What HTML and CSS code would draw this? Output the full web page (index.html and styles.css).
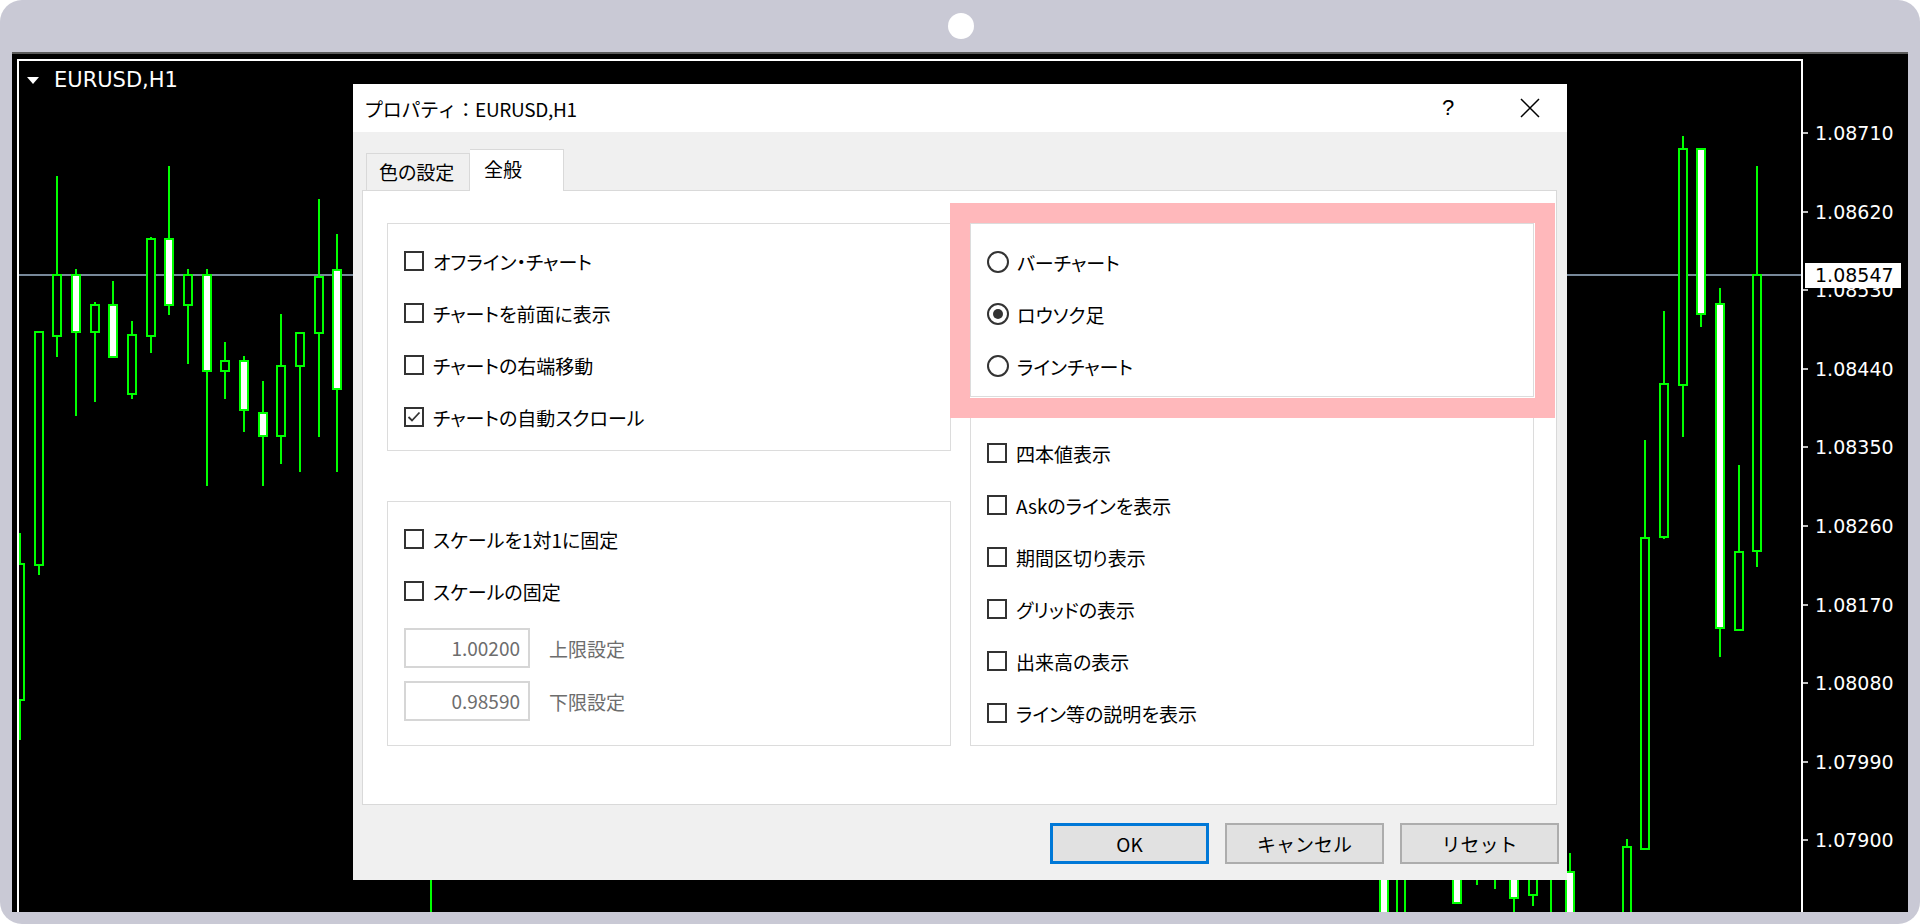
FILE: index.html
```html
<!DOCTYPE html>
<html>
  <head>
    <meta charset="utf-8">
    <title>プロパティ：EURUSD,H1</title>
    <link rel="stylesheet" href="styles.css">
  </head>
  <body>
    <div class="frame">

      <div class="frame-top">
        <div class="camera"></div>
      </div>

      <div class="chart">
        <svg class="chart-canvas" viewBox="12 54 1896 858" width="1896" height="858">
          <defs>
            <clipPath id="pane">
              <rect x="19" y="61" width="1782" height="851"></rect>
            </clipPath>
          </defs>

          <path d="M18 912 V60 H1802 V912" class="pane-border"></path>

          <polygon points="27,77 39,77 33,84" class="symbol"></polygon>
          <text x="54" y="87" class="symbol">EURUSD,H1</text>

          <g clip-path="url(#pane)">
            <line x1="19" y1="275" x2="1801" y2="275" class="price-line"></line>
            <g class="js-candles"></g>
          </g>

          <g class="js-axis"></g>

          <rect x="1805" y="263" width="96" height="25" class="price-box"></rect>
          <text x="1815" y="282" class="axis-label price-box-text">1.08547</text>
        </svg>

        <div class="dialog">
          <div class="title-bar">
            <p class="title">プロパティ：EURUSD,H1</p>
            <span class="help-button">?</span>
            <span class="close-button">
              <svg width="20" height="20" viewBox="0 0 20 20">
                <path d="M1 1 L19 19 M19 1 L1 19"></path>
              </svg>
            </span>
          </div>

          <div class="dialog-body">
            <div class="tabs">
              <div class="tab">色の設定</div>
              <div class="tab tab-active">全般</div>
            </div>

            <div class="tab-panel">
              <div class="column">
                <div class="group group-chart">
                  <div class="option"><span class="checkbox"></span>オフライン・チャート</div>
                  <div class="option"><span class="checkbox"></span>チャートを前面に表示</div>
                  <div class="option"><span class="checkbox"></span>チャートの右端移動</div>
                  <div class="option">
                    <span class="checkbox">
                      <svg width="16" height="16" viewBox="0 0 16 16">
                        <polyline points="2.5,8 6,11.5 13.5,3.5"></polyline>
                      </svg>
                    </span>チャートの自動スクロール
                  </div>
                </div>

                <div class="group group-scale">
                  <div class="option"><span class="checkbox"></span>スケールを1対1に固定</div>
                  <div class="option"><span class="checkbox"></span>スケールの固定</div>
                  <div class="limit">
                    <span class="limit-input">1.00200</span>
                    <span class="limit-label">上限設定</span>
                  </div>
                  <div class="limit limit-low">
                    <span class="limit-input">0.98590</span>
                    <span class="limit-label">下限設定</span>
                  </div>
                </div>
              </div>

              <div class="column column-right">
                <div class="group group-type">
                  <div class="option option-radio"><span class="radio"></span>バーチャート</div>
                  <div class="option option-radio"><span class="radio radio-checked"></span>ロウソク足</div>
                  <div class="option option-radio"><span class="radio"></span>ラインチャート</div>
                </div>

                <div class="group group-show">
                  <div class="option"><span class="checkbox"></span>四本値表示</div>
                  <div class="option"><span class="checkbox"></span>Askのラインを表示</div>
                  <div class="option"><span class="checkbox"></span>期間区切り表示</div>
                  <div class="option"><span class="checkbox"></span>グリッドの表示</div>
                  <div class="option"><span class="checkbox"></span>出来高の表示</div>
                  <div class="option"><span class="checkbox"></span>ライン等の説明を表示</div>
                </div>
              </div>

              <div class="highlight"></div>
            </div>

            <div class="buttons">
              <button class="dialog-button button-default">OK</button>
              <button class="dialog-button">キャンセル</button>
              <button class="dialog-button">リセット</button>
            </div>
          </div>
        </div>
      </div>

    </div>

    <script>
      // x, high, body top, body bottom, low, filled
      const candles = [
        [20, 533, 564, 700, 740, 0],
        [39, 332, 332, 565, 575, 0],
        [57, 176, 275, 336, 357, 0],
        [76, 269, 275, 332, 416, 1],
        [95, 302, 305, 332, 402, 0],
        [113, 281, 305, 357, 357, 1],
        [132, 321, 335, 394, 399, 0],
        [151, 237, 239, 336, 353, 0],
        [169, 166, 239, 305, 315, 1],
        [188, 269, 275, 305, 364, 0],
        [207, 269, 275, 371, 486, 1],
        [225, 342, 361, 371, 399, 0],
        [244, 356, 361, 410, 432, 1],
        [263, 381, 413, 436, 486, 1],
        [281, 314, 366, 436, 464, 0],
        [300, 333, 333, 366, 472, 0],
        [319, 199, 277, 333, 437, 0],
        [337, 234, 270, 389, 472, 1],
        [431, 860, 860, 870, 915, 0],
        [1384, 850, 850, 930, 930, 1],
        [1401, 850, 850, 930, 930, 0],
        [1457, 850, 860, 903, 903, 1],
        [1477, 860, 865, 870, 885, 0],
        [1495, 860, 865, 870, 889, 0],
        [1514, 850, 860, 898, 915, 1],
        [1533, 850, 860, 895, 906, 0],
        [1551, 850, 860, 870, 915, 0],
        [1570, 853, 872, 930, 930, 1],
        [1627, 839, 847, 930, 930, 0],
        [1645, 440, 538, 849, 849, 0],
        [1664, 311, 384, 537, 539, 0],
        [1683, 136, 149, 385, 437, 0],
        [1701, 149, 149, 314, 327, 1],
        [1720, 288, 304, 628, 657, 1],
        [1739, 465, 552, 630, 630, 0],
        [1757, 166, 275, 551, 567, 0]
      ];

      let candleHtml = '';
      candles.forEach(function (c) {
        candleHtml += `<line x1="${c[0]}" y1="${c[1]}" x2="${c[0]}" y2="${c[4]}" class="wick"></line>`;
        candleHtml += `<rect x="${c[0] - 4}" y="${c[2]}" width="8" height="${c[3] - c[2]}" class="${c[5] ? 'body body-up' : 'body'}"></rect>`;
      });
      document.querySelector('.js-candles').innerHTML = candleHtml;

      const prices = ['1.08710', '1.08620', '1.08530', '1.08440', '1.08350', '1.08260',
                      '1.08170', '1.08080', '1.07990', '1.07900', '1.07810'];

      let axisHtml = '';
      prices.forEach(function (price, i) {
        const y = Math.round(133 + i * 78.6);
        axisHtml += `<line x1="1803" y1="${y}" x2="1808" y2="${y}" class="axis-tick"></line>`;
        axisHtml += `<text x="1815" y="${y + 7}" class="axis-label">${price}</text>`;
      });
      document.querySelector('.js-axis').innerHTML = axisHtml;
    </script>
  </body>
</html>
```

FILE: styles.css
```css
body {
  margin: 0;
  background-color: white;
  font-family: "Noto Sans CJK JP", sans-serif;
}

.frame {
  width: 1920px;
  height: 924px;
  box-sizing: border-box;
  padding: 0 12px 12px 12px;
  display: flex;
  flex-direction: column;
  background-color: rgb(201, 201, 213);
  border-radius: 22px;
}

.frame-top {
  height: 52px;
  flex-shrink: 0;
  display: flex;
  justify-content: center;
  align-items: center;
}

.camera {
  width: 26px;
  height: 26px;
  margin-left: 2px;
  border-radius: 13px;
  background-color: white;
}

.chart {
  position: relative;
  flex: 1;
  background-color: black;
  border-top: 2px solid rgb(90, 90, 90);
  overflow: hidden;
}

.chart-canvas {
  display: block;
}

/* chart drawing */

.pane-border {
  fill: none;
  stroke: white;
  stroke-width: 2;
}

.symbol {
  fill: white;
  font-family: "DejaVu Sans", sans-serif;
  font-size: 21px;
}

.price-line {
  stroke: rgb(119, 136, 153);
  stroke-width: 2;
}

.wick {
  stroke: rgb(0, 255, 0);
  stroke-width: 2;
}

.body {
  fill: black;
  stroke: rgb(0, 255, 0);
  stroke-width: 2;
}

.body-up {
  fill: white;
}

.axis-tick {
  stroke: white;
  stroke-width: 1.5;
}

.axis-label {
  fill: white;
  font-family: "DejaVu Sans", sans-serif;
  font-size: 19px;
}

.price-box {
  fill: white;
}

.price-box-text {
  fill: black;
}

/* dialog */

.dialog {
  position: absolute;
  left: 341px;
  top: 30px;
  width: 1214px;
  background-color: rgb(240, 240, 240);
  font-family: "Noto Sans CJK JP", sans-serif;
  font-feature-settings: "palt";
  font-size: 19px;
  color: black;
}

.title-bar {
  height: 48px;
  display: flex;
  align-items: center;
  background-color: white;
}

.title {
  flex: 1;
  margin: 0;
  padding-left: 11px;
  font-feature-settings: normal;
  letter-spacing: -0.3px;
}

.help-button {
  width: 90px;
  text-align: center;
  font-family: "Liberation Sans", sans-serif;
  font-size: 22px;
}

.close-button {
  width: 74px;
  display: flex;
  justify-content: center;
}

.close-button path {
  stroke: black;
  stroke-width: 1.5;
  fill: none;
}

.dialog-body {
  padding: 17px 10px 16px 9px;
}

.tabs {
  height: 41px;
  display: flex;
  align-items: flex-end;
  padding-left: 4px;
}

.tab {
  box-sizing: border-box;
  width: 104px;
  height: 37px;
  padding-left: 12px;
  border: 1px solid rgb(217, 217, 217);
  border-bottom: none;
  line-height: 36px;
}

.tab-active {
  position: relative;
  z-index: 1;
  width: 94px;
  height: 42px;
  margin-bottom: -1px;
  padding-left: 14px;
  border-left: none;
  background-color: white;
  line-height: 38px;
}

.tab-panel {
  position: relative;
  box-sizing: border-box;
  height: 615px;
  display: flex;
  gap: 19px;
  padding: 32px 22px 0 24px;
  background-color: white;
  border: 1px solid rgb(217, 217, 217);
}

.column {
  width: 564px;
  display: flex;
  flex-direction: column;
  gap: 50px;
}

.column-right {
  gap: 20px;
}

.group {
  border: 1px solid rgb(220, 220, 220);
  padding-left: 16px;
}

.group-chart {
  padding-top: 11px;
  padding-bottom: 7px;
}

.group-scale {
  padding-top: 11px;
  padding-bottom: 24px;
}

.group-type {
  padding-top: 12px;
  padding-bottom: 4px;
}

.group-show {
  padding-top: 9px;
  padding-bottom: 6px;
}

.option {
  height: 52px;
  display: flex;
  align-items: center;
  gap: 9px;
}

.option-radio {
  gap: 8px;
}

.checkbox {
  box-sizing: border-box;
  width: 20px;
  height: 20px;
  display: flex;
  justify-content: center;
  align-items: center;
  border: 2px solid rgb(51, 51, 51);
  background-color: white;
}

.checkbox polyline {
  fill: none;
  stroke: rgb(51, 51, 51);
  stroke-width: 1.8;
}

.radio {
  box-sizing: border-box;
  width: 22px;
  height: 22px;
  display: flex;
  justify-content: center;
  align-items: center;
  border: 2px solid rgb(51, 51, 51);
  border-radius: 11px;
}

.radio-checked::after {
  content: "";
  width: 10px;
  height: 10px;
  border-radius: 5px;
  background-color: rgb(51, 51, 51);
}

.limit {
  display: flex;
  align-items: center;
  gap: 19px;
  margin-top: 11px;
}

.limit-low {
  margin-top: 13px;
}

.limit-input {
  box-sizing: border-box;
  width: 126px;
  height: 40px;
  padding-right: 8px;
  border: 2px solid rgb(214, 214, 214);
  text-align: right;
  line-height: 36px;
  color: rgb(109, 109, 109);
}

.limit-label {
  color: rgb(109, 109, 109);
}

.highlight {
  position: absolute;
  left: 587px;
  top: 12px;
  width: 605px;
  height: 215px;
  box-sizing: border-box;
  border: 20px solid rgb(255, 184, 187);
}

.buttons {
  display: flex;
  justify-content: flex-end;
  gap: 16px;
  margin-top: 18px;
  margin-right: -2px;
}

.dialog-button {
  box-sizing: border-box;
  width: 159px;
  height: 41px;
  padding: 0;
  font-family: inherit;
  font-size: 19px;
  color: black;
  background-color: rgb(225, 225, 225);
  border: 2px solid rgb(173, 173, 173);
}

.button-default {
  border-color: rgb(0, 120, 215);
  box-shadow: inset 0 0 0 1px rgb(0, 120, 215);
}
```
